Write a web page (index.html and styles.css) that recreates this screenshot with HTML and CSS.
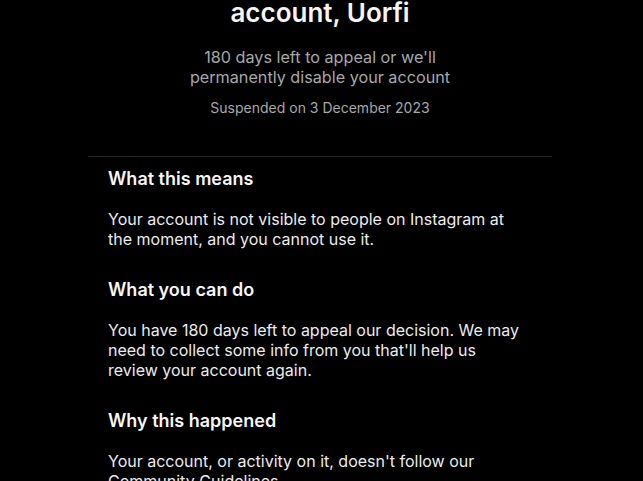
FILE: index.html
```html
<!DOCTYPE html>
<html lang="en">
<head>
    <meta charset="UTF-8">
    <meta name="viewport" content="width=device-width, initial-scale=1.0">
    <title>Account suspended</title>
    <link rel="stylesheet" href="styles.css">
</head>
<body>
    <div class="page">
        <!-- Summary -->
        <section class="summary">
            <h1 class="title">account, Uorfi</h1>
            <p class="subtitle">180 days left to appeal or we'll<br>permanently disable your account</p>
            <p class="date">Suspended on 3 December 2023</p>
        </section>

        <!-- Details -->
        <section class="details">
            <div class="block">
                <h2>What this means</h2>
                <p>Your account is not visible to people on Instagram at the moment, and you cannot use it.</p>
            </div>
            <div class="block">
                <h2>What you can do</h2>
                <p>You have 180 days left to appeal our decision. We may need to collect some info from you that'll help us review your account again.</p>
            </div>
            <div class="block">
                <h2>Why this happened</h2>
                <p>Your account, or activity on it, doesn't follow our Community Guidelines.</p>
            </div>
        </section>
    </div>
</body>
</html>
```

FILE: styles.css
```css
:root {
    --bg: #000000;
    --text: #f5f5f5;
    --muted: #a8a8a8;
    --divider: #262626;
}

* {
    margin: 0;
    padding: 0;
    box-sizing: border-box;
}

body {
    background-color: var(--bg);
    color: var(--text);
    font-family: "Inter", "Liberation Sans", Arial, sans-serif;
    overflow: hidden;
}

.page {
    width: 464px;
    margin-left: 88px;
}

/* Summary */
.summary {
    text-align: center;
    padding-bottom: 39px;
    border-bottom: 1px solid var(--divider);
}

.title {
    font-size: 26px;
    font-weight: 600;
    line-height: 34px;
    margin-top: -4px;
}

.subtitle {
    color: var(--muted);
    font-size: 16.2px;
    line-height: 20px;
    margin-top: 17px;
}

.date {
    color: var(--muted);
    font-size: 14px;
    line-height: 18px;
    margin-top: 12px;
}

/* Details */
.details {
    padding: 10px 28px 0 20px;
}

.block h2 {
    font-size: 18px;
    font-weight: 600;
    line-height: 24px;
    margin-bottom: 18px;
}

.block p {
    font-size: 16px;
    line-height: 20px;
    color: #ececec;
    margin-bottom: 29px;
}
```
